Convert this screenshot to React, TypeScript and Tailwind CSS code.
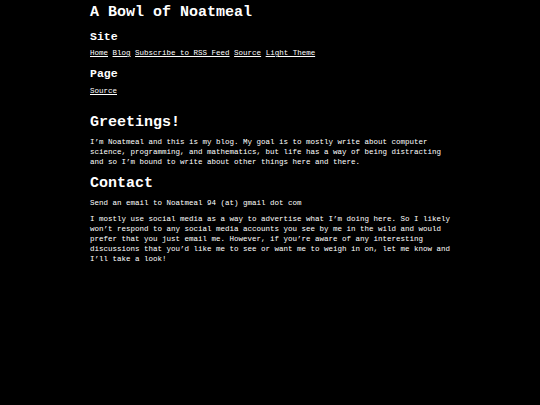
import React from 'react';

const body = "font-['Liberation_Mono',monospace]";

const App: React.FC = () => {
  const links = ['Home', 'Blog', 'Subscribe to RSS Feed', 'Source', 'Light Theme'];

  return (
    <div className={`min-h-[405px] bg-black text-white ${body}`}>
      <div className="ml-[90px] w-[364px] pt-[3px]">
        {/* 헤더 */}
        <h1 className="text-[15px] leading-[20px] font-bold">A Bowl of Noatmeal</h1>

        <h2 className="mt-[7px] text-[11.5px] leading-[14px] font-bold">Site</h2>
        <nav className="mt-[4px] text-[7.5px] leading-[10px]">
          {links.map((l, i) => (
            <React.Fragment key={l}>
              <a href="#" className="underline">{l}</a>
              {i < links.length - 1 && ' '}
            </React.Fragment>
          ))}
        </nav>

        <h2 className="mt-[9px] text-[11.5px] leading-[14px] font-bold">Page</h2>
        <div className="mt-[5px] text-[7.5px] leading-[10px]">
          <a href="#" className="underline">Source</a>
        </div>

        {/* 본문 */}
        <h2 className="mt-[17px] text-[15px] leading-[20px] font-bold">Greetings!</h2>
        <p className="mt-[4px] text-[7.5px] leading-[10px]">
          I’m Noatmeal and this is my blog. My goal is to mostly write about computer science,
          programming, and mathematics, but life has a way of being distracting and so I’m bound
          to write about other things here and there.
        </p>

        <h2 className="mt-[7px] text-[15px] leading-[20px] font-bold">Contact</h2>
        <p className="mt-[4px] text-[7.5px] leading-[10px]">Send an email to Noatmeal 94 (at) gmail dot com</p>
        <p className="mt-[6px] text-[7.5px] leading-[10px]">
          I mostly use social media as a way to advertise what I’m doing here. So I likely won’t
          respond to any social media accounts you see by me in the wild and would prefer that you
          just email me. However, if you’re aware of any interesting discussions that you’d like
          me to see or want me to weigh in on, let me know and I’ll take a look!
        </p>
      </div>
    </div>
  );
};

export default App;
